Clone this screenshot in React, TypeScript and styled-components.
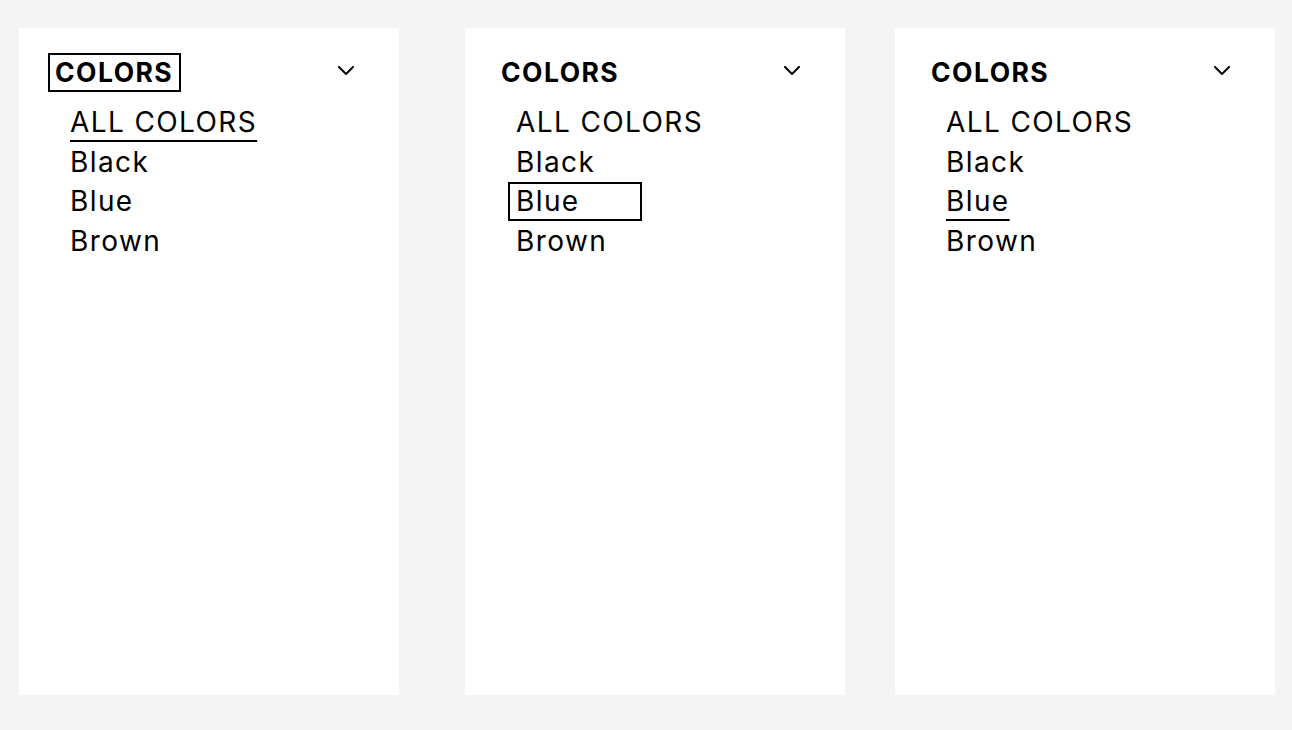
import React from "react";
import styled, { createGlobalStyle, css } from "styled-components";

const Global = createGlobalStyle`
  html, body { margin: 0; padding: 0; }
  body {
    background: #f4f4f4;
    font-family: Inter, "Noto Sans", "Liberation Sans", sans-serif;
    color: #000;
  }
`;

const Page = styled.div`
  display: flex;
  align-items: flex-start;
  padding: 28px 0 0 19px;
  width: 1292px;
  height: 730px;
  box-sizing: border-box;
`;

const Panel = styled.section<{ $offset: number }>`
  width: 380px;
  height: 667px;
  box-sizing: border-box;
  margin-left: ${(p) => p.$offset}px;
  background: #fff;
  padding: 24px 45px 0 36px;
  display: flex;
  flex-direction: column;
`;

const Header = styled.div`
  display: flex;
  align-items: center;
  justify-content: space-between;
  height: 40px;
`;

const focusRing = css`
  outline: 2px solid #000;
  outline-offset: 2px;
`;

const Title = styled.span<{ $focused?: boolean }>`
  display: inline-block;
  font-size: 26.5px;
  font-weight: 700;
  letter-spacing: 0.055em;
  line-height: 29px;
  padding: 1px 4px 1px 3px;
  margin-left: -3px;
  ${(p) => p.$focused && focusRing}
`;

const Chevron = styled.svg`
  width: 16px;
  height: 9px;
  margin-top: -4px;
`;

const List = styled.ul`
  list-style: none;
  margin: 11px 0 0;
  padding: 0 0 0 15px;
  display: flex;
  flex-direction: column;
`;

const Item = styled.li`
  font-size: 28px;
  letter-spacing: 0.05em;
  line-height: 39.7px;
  height: 39.7px;
`;

const ItemLink = styled.span<{ $state?: "focus" | "active" }>`
  display: inline-block;
  ${(p) =>
    p.$state === "active" &&
    css`
      text-decoration: underline;
      text-decoration-thickness: 2px;
      text-underline-offset: 8px;
    `}
  ${(p) =>
    p.$state === "focus" &&
    css`
      width: 122px;
      line-height: 31px;
      padding-left: 4px;
      margin-left: -4px;
      ${focusRing}
    `}
`;

type State = "focus" | "active" | undefined;

const items = ["ALL COLORS", "Black", "Blue", "Brown"];

function Filter({
  offset,
  titleFocused,
  itemStates,
}: {
  offset: number;
  titleFocused?: boolean;
  itemStates: Record<string, State>;
}) {
  return (
    <Panel $offset={offset}>
      <Header>
        <Title $focused={titleFocused}>COLORS</Title>
        <Chevron viewBox="0 0 16 9" fill="none">
          <polyline
            points="1,1 8,8 15,1"
            stroke="#000"
            strokeWidth="2"
            strokeLinecap="square"
            strokeLinejoin="miter"
          />
        </Chevron>
      </Header>
      <List>
        {items.map((it) => (
          <Item key={it}>
            <ItemLink $state={itemStates[it]}>{it}</ItemLink>
          </Item>
        ))}
      </List>
    </Panel>
  );
}

export default function App() {
  return (
    <>
      <Global />
      <Page>
        <Filter offset={0} titleFocused itemStates={{ "ALL COLORS": "active" }} />
        <Filter offset={66} itemStates={{ Blue: "focus" }} />
        <Filter offset={50} itemStates={{ Blue: "active" }} />
      </Page>
    </>
  );
}
